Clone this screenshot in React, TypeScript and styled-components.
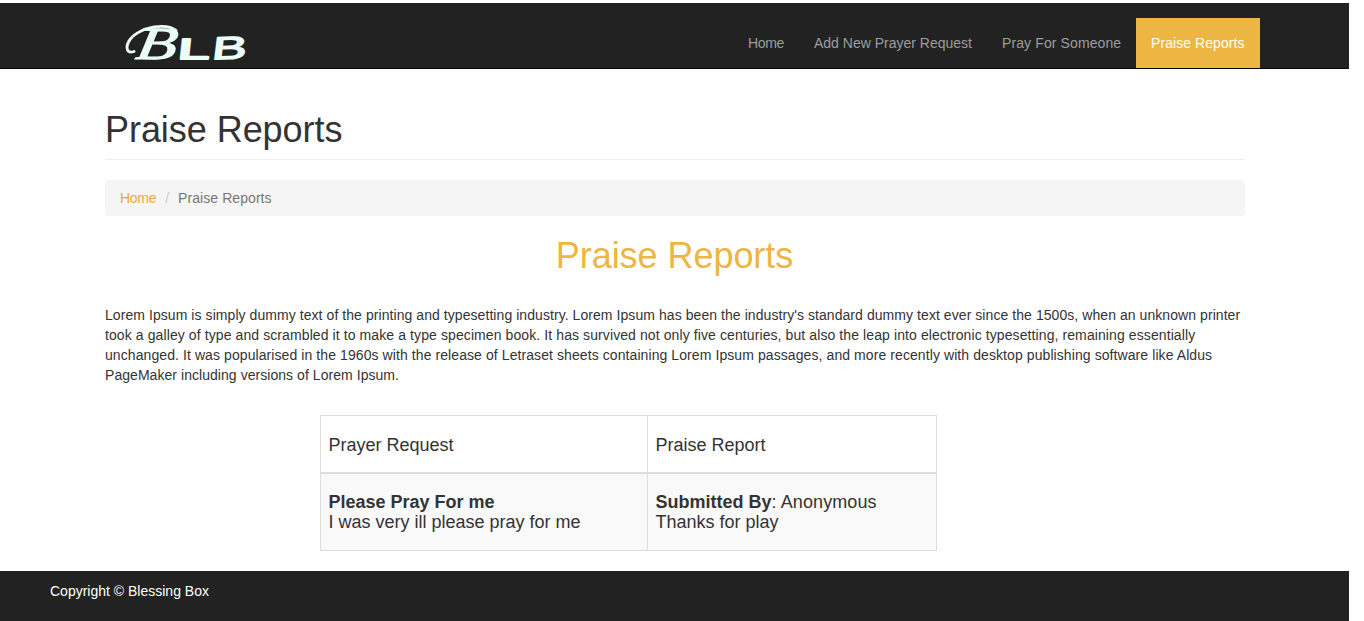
import React from "react";
import styled, { createGlobalStyle } from "styled-components";

const GlobalStyle = createGlobalStyle`
  *, *::before, *::after { box-sizing: border-box; }
  body {
    margin: 0;
    background: #fff;
    color: #333;
    font-family: "Liberation Sans", Arial, sans-serif;
    font-size: 14px;
    line-height: 20px;
  }
`;

const Page = styled.div`
  width: 1349px;
  height: 621px;
  padding-top: 3px;
  display: flex;
  flex-direction: column;
`;

const NavBar = styled.header`
  height: 66px;
  flex: none;
  background: #222;
  border-bottom: 1px solid #080808;
`;

const NavInner = styled.div`
  width: 1170px;
  height: 65px;
  margin-left: 90px;
  padding-left: 30px;
  display: flex;
  justify-content: space-between;
  align-items: flex-end;
`;

const Logo = styled.svg`
  display: block;
  width: 132px;
  height: 48px;
  overflow: visible;
`;

const NavList = styled.nav`
  display: flex;
`;

const NavLink = styled.a<{ $active?: boolean; $width: number; $tracking: number }>`
  width: ${(p) => p.$width}px;
  height: 50px;
  padding: 15px 0 15px 15px;
  white-space: nowrap;
  letter-spacing: ${(p) => p.$tracking}px;
  color: ${(p) => (p.$active ? "#fff" : "#9d9d9d")};
  background: ${(p) => (p.$active ? "#edb642" : "transparent")};
`;

const Container = styled.main`
  width: 1140px;
  margin-left: 105px;
  flex: 1;
`;

const PageHeader = styled.div`
  margin: 41px 0 20px;
  padding-bottom: 9px;
  height: 50px;
  border-bottom: 1px solid #eee;
`;

const Title = styled.h1<{ $accent?: boolean }>`
  margin: 0;
  font-size: 36px;
  font-weight: 500;
  line-height: 40px;
  letter-spacing: -0.05px;
  ${(p) => p.$accent && "color: #edb642; text-align: center; margin: 20px 1px 29px 0;"}
`;

const Breadcrumb = styled.ol`
  list-style: none;
  margin: 0;
  padding: 8px 15px;
  display: flex;
  background: #f5f5f5;
  border-radius: 4px;
  color: #777;
`;

const Crumb = styled.li<{ $link?: boolean }>`
  color: ${(p) => (p.$link ? "#edab30" : "#777")};
  letter-spacing: ${(p) => (p.$link ? -0.3 : 0.07)}px;
  li + &::before {
    content: "/\\00a0";
    padding: 0 5px 0 9px;
    color: #ccc;
  }
`;

const Intro = styled.p`
  margin: 0 0 30px;
`;

const Line = styled.span<{ $tracking: number }>`
  display: block;
  white-space: nowrap;
  letter-spacing: ${(p) => p.$tracking}px;
`;

const Table = styled.table`
  width: 617px;
  margin-left: 215px;
  table-layout: fixed;
  border-collapse: collapse;
  font-size: 18px;
  line-height: 20px;
`;

const HeadCell = styled.th<{ $width: number }>`
  width: ${(p) => p.$width}px;
  height: 57px;
  padding: 2px 7.5px 0;
  border: 1px solid #ddd;
  border-bottom-width: 2px;
  text-align: left;
  font-weight: 500;
`;

const Cell = styled.td`
  height: 78px;
  padding: 1px 7.5px 0;
  border: 1px solid #ddd;
  background: #f9f9f9;
`;

const Submitter = styled.span`
  letter-spacing: 0.1px;
`;

const Footer = styled.footer`
  height: 50px;
  flex: none;
  padding: 10px 50px;
  background: #222;
  color: #fff;
`;

const Brand = () => (
  <Logo viewBox="0 0 132 48" role="img" aria-label="BLB">
    <g fill="#ecfdf8" stroke="#ecfdf8">
      <text
        transform="translate(14.5 39.4) skewX(-9) scale(1.45 1)"
        fontFamily="Liberation Serif, serif"
        fontStyle="italic"
        fontSize="46"
        strokeWidth="1"
      >
        B
      </text>
      <g fontFamily="Liberation Sans, sans-serif" strokeLinejoin="round">
        <text fontSize="29" strokeWidth="2" transform="translate(57 38.8) skewX(-6) scale(1.98 1)">
          L
        </text>
        <text fontSize="32" strokeWidth="1.4" transform="translate(91 39.6) skewX(-9) rotate(-2) scale(1.62 1)">
          B
        </text>
      </g>
      <path
        d="M56 10.5C51 6.5 43 5.6 34 7C22 9 12 15 8.5 22C5.5 28 7 34 14 31.5"
        fill="none"
        strokeWidth="2.9"
        strokeLinecap="round"
      />
    </g>
  </Logo>
);

const links = [
  { label: "Home", width: 66, tracking: -0.35 },
  { label: "Add New Prayer Request", width: 188, tracking: 0 },
  { label: "Pray For Someone", width: 149, tracking: 0.11 },
  { label: "Praise Reports", width: 124, tracking: 0.07 },
];

const introLines = [
  {
    tracking: 0.065,
    text: "Lorem Ipsum is simply dummy text of the printing and typesetting industry. Lorem Ipsum has been the industry's standard dummy text ever since the 1500s, when an unknown printer",
  },
  {
    tracking: 0.096,
    text: "took a galley of type and scrambled it to make a type specimen book. It has survived not only five centuries, but also the leap into electronic typesetting, remaining essentially",
  },
  {
    tracking: 0.084,
    text: "unchanged. It was popularised in the 1960s with the release of Letraset sheets containing Lorem Ipsum passages, and more recently with desktop publishing software like Aldus",
  },
  { tracking: 0.05, text: "PageMaker including versions of Lorem Ipsum." },
];

export default function App() {
  return (
    <>
      <GlobalStyle />
      <Page>
        <NavBar>
          <NavInner>
            <Brand />
            <NavList>
              {links.map(({ label, width, tracking }) => (
                <NavLink key={label} $active={label === "Praise Reports"} $width={width} $tracking={tracking}>
                  {label}
                </NavLink>
              ))}
            </NavList>
          </NavInner>
        </NavBar>
        <Container>
          <PageHeader>
            <Title>Praise Reports</Title>
          </PageHeader>
          <Breadcrumb>
            <Crumb $link>Home</Crumb>
            <Crumb>Praise Reports</Crumb>
          </Breadcrumb>
          <Title as="h2" $accent>
            Praise Reports
          </Title>
          <Intro>
            {introLines.map(({ text, tracking }) => (
              <Line key={text} $tracking={tracking}>
                {text}
              </Line>
            ))}
          </Intro>
          <Table>
            <thead>
              <tr>
                <HeadCell $width={327}>Prayer Request</HeadCell>
                <HeadCell $width={289}>Praise Report</HeadCell>
              </tr>
            </thead>
            <tbody>
              <tr>
                <Cell>
                  <b>Please Pray For me</b>
                  <br />I was very ill please pray for me
                </Cell>
                <Cell>
                  <b>Submitted By</b>
                  <Submitter>: Anonymous</Submitter>
                  <br />
                  Thanks for play
                </Cell>
              </tr>
            </tbody>
          </Table>
        </Container>
        <Footer>Copyright © Blessing Box</Footer>
      </Page>
    </>
  );
}
